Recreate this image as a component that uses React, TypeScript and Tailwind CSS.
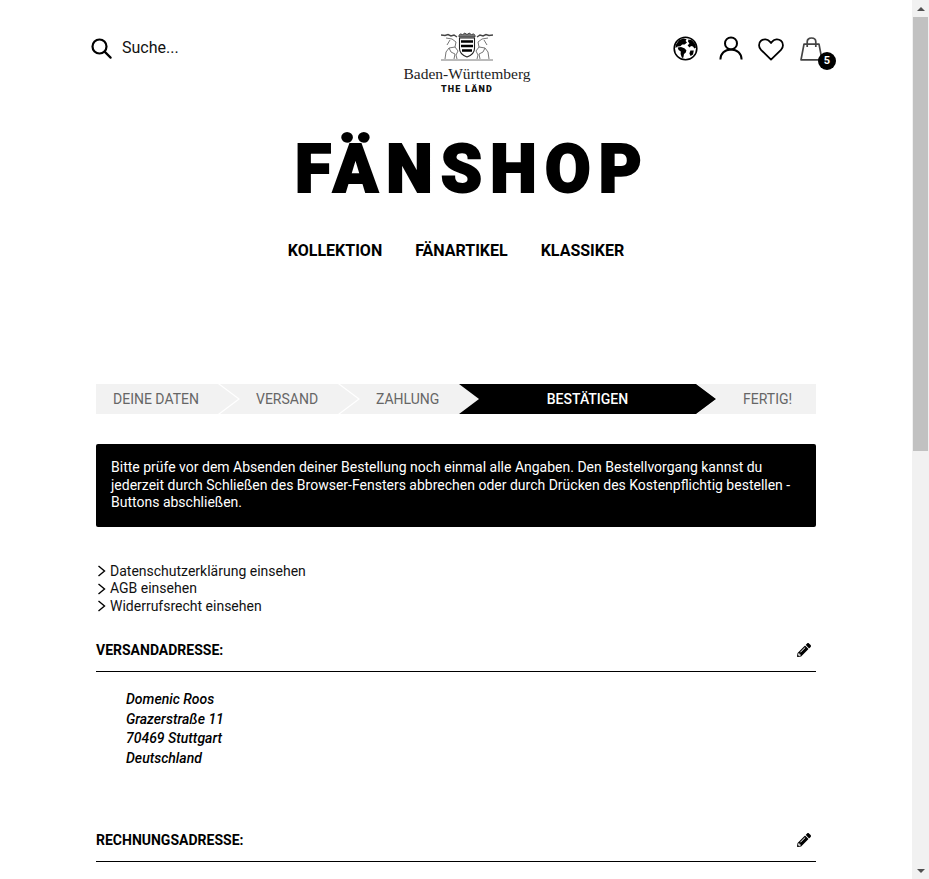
import { FaPencilAlt } from 'react-icons/fa'

const roboto = 'font-["Roboto",sans-serif]'

function SearchIcon() {
    return (
        <svg width="22" height="22" viewBox="0 0 22 22" fill="none" stroke="#000" strokeWidth="2.2">
            <circle cx="9.5" cy="9.5" r="7" />
            <path d="M14.6 14.6 20.6 20.6" strokeLinecap="round" />
        </svg>
    )
}

function GlobeIcon() {
    return (
        <svg width="25" height="25" viewBox="0 0 25 25">
            <circle cx="12.5" cy="12.5" r="11.3" fill="#fff" stroke="#000" strokeWidth="1.6" />
            <path d="M6 4.2 10 2.6 13.5 3 12.6 5 14 6.4 11.6 8.6 9.2 8.4 7.4 10.2 4.6 10.6 2.6 12 3 8.6Z" fill="#000" />
            <path d="M4.6 11.6 8 11 11.4 12.2 13.4 14.2 12.8 16.4 11 18 10.4 21.6 9 22 7.6 18 7.8 15.4 5.6 14Z" fill="#000" />
            <path d="M15.4 3.4 19 4.2 22 7.8 23 11.6 21.4 12.4 20 10.4 18 10 16.6 11.6 14.6 9.6 16.4 7.4 15 5.6Z" fill="#000" />
            <path d="M17.4 14.4 20.8 14.6 20 18.4 17.6 20 16.4 17.4Z" fill="#000" />
        </svg>
    )
}

function UserIcon() {
    return (
        <svg width="24" height="24" viewBox="0 0 24 24" fill="none" stroke="#000" strokeWidth="2">
            <circle cx="12" cy="7.4" r="6" />
            <path d="M1.4 23.6c0-6 4.4-10.2 10.6-10.2s10.6 4.2 10.6 10.2" />
        </svg>
    )
}

function HeartIcon() {
    return (
        <svg width="26" height="23" viewBox="0 0 26 23" fill="none" stroke="#000" strokeWidth="1.8" strokeLinejoin="round">
            <path d="M13 21.6 3 11.8C.4 9.2.4 5 3 2.8c2.6-2.2 6.6-1.8 8.6.6L13 5l1.4-1.6c2-2.4 6-2.8 8.6-.6 2.6 2.2 2.6 6.4 0 9Z" />
        </svg>
    )
}

function BagIcon() {
    return (
        <svg width="23" height="24" viewBox="0 0 23 24" fill="none" stroke="#444" strokeWidth="1.7" strokeLinejoin="round">
            <path d="M4 7.2h15l3 15.6H1Z" />
            <path d="M7.2 10V4.8C7.2 2.4 9 1 11.5 1s4.3 1.4 4.3 3.8V10" />
        </svg>
    )
}

function CoatOfArms() {
    return (
        <svg width="52" height="30" viewBox="0 0 52 30" fill="none" stroke="#666" strokeWidth="0.9">
            {/* crown */}
            <path d="M18 6c-.5-2 1-3.500 2.500-3l1 1 2-2 2.500 1.500L28.500 2l2 2 1-1c1.500-.5 3 1 2.500 3Z" fill="#777" stroke="#333" />
            {/* shield */}
            <path d="M18.500 7h15v10.500c0 4.500-3.500 7-7.500 8.500-4-1.500-7.500-4-7.500-8.500Z" fill="#fff" stroke="#222" strokeWidth="1.100" />
            <path d="M20 10.500h12M20 15h12M21 19.500h10" stroke="#000" strokeWidth="2.600" />
            {/* stag */}
            <path d="M0 4l4 .5 3-1 3 1.500 3-1 3 2" stroke="#444" strokeWidth="1.500" />
            <path d="M5 7l6 1 4 3-1 5 3 4-2 4 1 4" />
            <path d="M14 16l-6 1-3 4-1 7M8 17l2 4 4 2-1 5M9 9l-3 5" />
            {/* griffin */}
            <path d="M52 4l-4 .5-3-1-3 1.500-3-1-3 2" stroke="#444" strokeWidth="1.500" />
            <path d="M47 7l-6 1-4 3 1 5-3 4 2 4-1 4" />
            <path d="M38 16l6 1 3 4 1 7M44 17l-2 4-4 2 1 5M43 9l3 5" />
            <path d="M0 29h52" strokeWidth="1.200" stroke="#777" />
        </svg>
    )
}

function Logo() {
    return (
        <div className="flex flex-col items-center">
            <CoatOfArms />
            <div className='mt-[4px] font-["Liberation_Serif",serif] text-[15.5px] leading-[18px] text-[#222] whitespace-nowrap'>
                Baden-Württemberg
            </div>
            <div className={`${roboto} mt-[1px] text-[9px] leading-[11px] font-black tracking-[1.2px] text-[#111]`}>THE LÄND</div>
        </div>
    )
}

function Header() {
    return (
        <div className="relative h-[102px]">
            <div className="flex items-start justify-between pt-[36px] pl-[90px] pr-[76px]">
                <div className="flex items-center gap-[10px]">
                    <SearchIcon />
                    <span className="mt-[1px] text-[16px] leading-[22px] text-[#111]">Suche...</span>
                </div>
                <div className="mt-[1px] flex items-center">
                    <span className="-mt-[2px] mr-[21px]"><GlobeIcon /></span>
                    <span className="-mt-[2px] mr-[15px]"><UserIcon /></span>
                    <span className="mr-[16px]"><HeartIcon /></span>
                    <span className="relative mr-[13px]">
                        <BagIcon />
                        <span className="absolute left-[18px] top-[15px] flex h-[18px] w-[18px] items-center justify-center rounded-full bg-black text-[11px] font-bold text-white">5</span>
                    </span>
                </div>
            </div>
            <div className="absolute left-[403px] top-[31px] w-[128px]">
                <Logo />
            </div>
        </div>
    )
}

const steps = [
    { label: 'DEINE DATEN', cls: 'w-[142px] pl-[17px] bg-[#f2f2f2] text-[#666]', clip: '[clip-path:polygon(0_0,122px_0,142px_50%,122px_100%,0_100%)]' },
    { label: 'VERSAND', cls: 'w-[138px] -ml-[18px] pl-[36px] bg-[#f2f2f2] text-[#666]', clip: '[clip-path:polygon(0_0,118px_0,138px_50%,118px_100%,0_100%,20px_50%)]' },
    { label: 'ZAHLUNG', cls: 'w-[139px] -ml-[18px] pl-[36px] bg-[#f2f2f2] text-[#666]', clip: '[clip-path:polygon(0_0,119px_0,139px_50%,119px_100%,0_100%,20px_50%)]' },
    { label: 'BESTÄTIGEN', cls: 'w-[257px] -ml-[20px] justify-center bg-black text-white font-medium', clip: '[clip-path:polygon(0_0,237px_0,257px_50%,237px_100%,0_100%,20px_50%)]' },
    { label: 'FERTIG!', cls: 'w-[119px] -ml-[19px] pl-[46px] bg-[#f2f2f2] text-[#666]', clip: '[clip-path:polygon(0_0,100%_0,100%_100%,0_100%,20px_50%)]' },
]

function Stepper() {
    return (
        <div className="flex h-[30px]">
            {steps.map((s) => (
                <div key={s.label} className={`flex shrink-0 items-center text-[14px] ${s.cls} ${s.clip}`}>
                    {s.label}
                </div>
            ))}
        </div>
    )
}

function LegalLink({ children }: { children: string }) {
    return (
        <div className="flex items-center text-[14px] leading-[17.5px] text-[#111]">
            <svg width="10" height="12" viewBox="0 0 10 12" fill="none" stroke="#000" strokeWidth="1.4" className="ml-[1px] mr-[3px]">
                <path d="M1.500 1 7.500 6 1.500 11" />
            </svg>
            {children}
        </div>
    )
}

function SectionHead({ title }: { title: string }) {
    return (
        <div className="flex h-[42px] items-center justify-between border-b border-black pr-[5px]">
            <span className="text-[14px] font-bold text-black">{title}</span>
            <FaPencilAlt className="mb-[2px] text-[14px] text-black" />
        </div>
    )
}

function Scrollbar() {
    return (
        <div className="flex w-[17px] shrink-0 flex-col items-center bg-[#f1f1f1]">
            <div className="flex h-[17px] items-center justify-center">
                <div className="h-0 w-0 border-x-[4px] border-b-[4px] border-x-transparent border-b-[#505050]" />
            </div>
            <div className="h-[434px] w-[15px] bg-[#c1c1c1]" />
            <div className="flex-1" />
            <div className="flex h-[17px] items-center justify-center">
                <div className="h-0 w-0 border-x-[4px] border-t-[4px] border-x-transparent border-t-[#505050]" />
            </div>
        </div>
    )
}

export default function App() {
    return (
        <div className={`flex h-[879px] overflow-hidden bg-white ${roboto}`}>
            <div className="min-w-0 flex-1 overflow-hidden">
                <Header />
                <div className="mt-[26px] whitespace-nowrap pl-[295px] text-[66px] font-black leading-[84px] tracking-[8.2px] text-black [-webkit-text-stroke:2px_#000]">FÄNSHOP</div>
                <div className="mt-[27px] flex justify-center gap-[33px] text-[16px] font-bold leading-[24px] text-black">
                    <span>KOLLEKTION</span>
                    <span>FÄNARTIKEL</span>
                    <span>KLASSIKER</span>
                </div>
                <div className="mx-auto mt-[121px] w-[720px]">
                    <Stepper />
                    <div className="mt-[30px] rounded-[2px] bg-black px-[15px] py-[15px] text-[14px] leading-[17.5px] text-white">
                        Bitte prüfe vor dem Absenden deiner Bestellung noch einmal alle Angaben. Den Bestellvorgang kannst du jederzeit durch Schließen des Browser-Fensters abbrechen oder durch Drücken des Kostenpflichtig bestellen -Buttons abschließen.
                    </div>
                    <div className="mt-[36px]">
                        <LegalLink>Datenschutzerklärung einsehen</LegalLink>
                        <LegalLink>AGB einsehen</LegalLink>
                        <LegalLink>Widerrufsrecht einsehen</LegalLink>
                    </div>
                    <div className="mt-[15px]">
                        <SectionHead title="VERSANDADRESSE:" />
                        <div className="h-[148px] pl-[30px] pt-[18px] text-[14px] font-medium italic leading-[19.6px] text-black">
                            <div>Domenic Roos</div>
                            <div>Grazerstraße 11</div>
                            <div>70469 Stuttgart</div>
                            <div>Deutschland</div>
                        </div>
                        <SectionHead title="RECHNUNGSADRESSE:" />
                    </div>
                </div>
            </div>
            <Scrollbar />
        </div>
    )
}
